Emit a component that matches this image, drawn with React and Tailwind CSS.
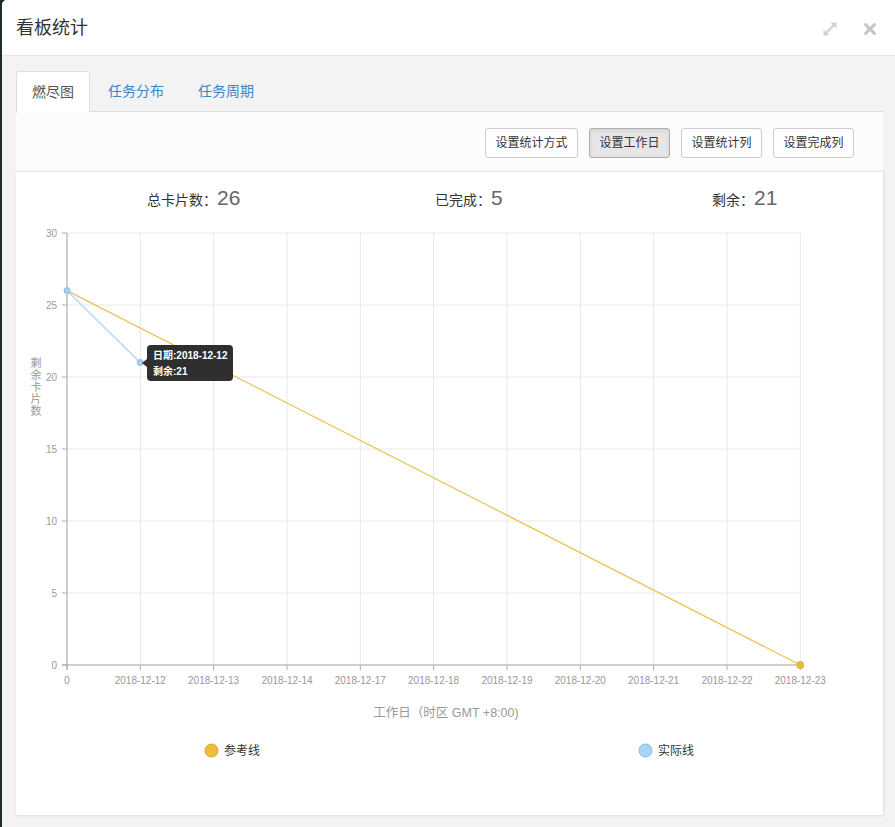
import React from "react";

const font = { fontFamily: '"Liberation Sans", "Noto Sans CJK SC", sans-serif' };

const xs = [67, 140.3, 213.6, 287, 360.3, 433.6, 507, 580.3, 653.6, 727, 800.3];
const xLabels = [
  "0",
  "2018-12-12",
  "2018-12-13",
  "2018-12-14",
  "2018-12-17",
  "2018-12-18",
  "2018-12-19",
  "2018-12-20",
  "2018-12-21",
  "2018-12-22",
  "2018-12-23",
];
const yTicks = [30, 25, 20, 15, 10, 5, 0];
const yPos = (v) => 665 - v * 14.4;

const Burndown = () => {
  return (
    <svg width="867" height="575" viewBox="0 0 867 575" className="block" style={font}>
      <g transform="translate(-16 -215)">
        {/* grid */}
        {yTicks.map((v) => (
          <line key={"h" + v} x1="67" x2="801" y1={yPos(v)} y2={yPos(v)} stroke="#e8e8e8" strokeWidth="1" />
        ))}
        {xs.map((x, i) => (
          <line key={"v" + i} x1={x} x2={x} y1="233" y2="665" stroke="#e8e8e8" strokeWidth="1" />
        ))}
        {/* axes */}
        <line x1="67" x2="67" y1="233" y2="670" stroke="#aaa" strokeWidth="1" />
        <line x1="62" x2="801" y1="665" y2="665" stroke="#aaa" strokeWidth="1" />
        {yTicks.map((v) => (
          <line key={"yt" + v} x1="62" x2="67" y1={yPos(v)} y2={yPos(v)} stroke="#aaa" />
        ))}
        {xs.map((x, i) => (
          <line key={"xt" + i} x1={x} x2={x} y1="665" y2="670" stroke="#aaa" />
        ))}
        {yTicks.map((v) => (
          <text key={"yl" + v} x="57" y={yPos(v) + 3.5} fontSize="10" fill="#999" textAnchor="end">
            {v}
          </text>
        ))}
        {xs.map((x, i) => (
          <text key={"xl" + i} x={x} y="684" fontSize="10" fill="#999" textAnchor="middle">
            {xLabels[i]}
          </text>
        ))}
        {/* axis names */}
        {["剩", "余", "卡", "片", "数"].map((c, i) => (
          <text key={c} x="36" y={367 + i * 12} fontSize="11" fill="#999" textAnchor="middle">
            {c}
          </text>
        ))}
        <text x="446" y="717" fontSize="12.5" fill="#999" textAnchor="middle">
          工作日（时区 GMT +8:00)
        </text>
        {/* series */}
        <line x1="67" y1="290.6" x2="800.3" y2="665" stroke="#e9c24f" strokeWidth="1.2" />
        <line x1="67" y1="290.6" x2="140.3" y2="362.6" stroke="#bcdcf2" strokeWidth="1.5" />
        <circle cx="67" cy="290.6" r="3" fill="#a9d0ec" stroke="#8dbbe0" strokeWidth="1" />
        <circle cx="140.3" cy="362.6" r="3" fill="#a9d0ec" stroke="#8dbbe0" strokeWidth="1" />
        <circle cx="800.3" cy="665" r="3.5" fill="#e6bb3c" stroke="#d8ad35" strokeWidth="1" />
        {/* tooltip */}
        <path d="M147 349 a4 4 0 0 1 4 -4 h78 a4 4 0 0 1 4 4 v28 a4 4 0 0 1 -4 4 h-78 a4 4 0 0 1 -4 -4 v-10 l-5 -4 l5 -4 z" fill="#2f2f2f" />
        <text x="153" y="359" fontSize="10" fontWeight="bold" fill="#fff">日期:2018-12-12</text>
        <text x="153" y="375" fontSize="10" fontWeight="bold" fill="#fff">剩余:21</text>
        {/* legend */}
        <circle cx="211.5" cy="750.5" r="6.5" fill="#efbd3a" stroke="#d9a82a" strokeWidth="1" />
        <text x="224" y="754.5" fontSize="12" fill="#333">参考线</text>
        <circle cx="645.5" cy="750.5" r="6.5" fill="#a9d3f2" stroke="#8cbde3" strokeWidth="1" />
        <text x="658" y="754.5" fontSize="12" fill="#333">实际线</text>
      </g>
    </svg>
  );
};

const App = () => {
  const buttons = ["设置统计方式", "设置工作日", "设置统计列", "设置完成列"];
  return (
    <div className="w-[895px] h-[827px] flex bg-[#1f2b30] overflow-hidden" style={font}>
      <div className="w-[2px] shrink-0 bg-[#1f2b30]" />
      <div className="flex-1 flex flex-col bg-[#f3f3f3] rounded-tl-[5px] overflow-hidden">
        {/* header */}
        <div className="h-[56px] shrink-0 bg-white border-b border-[#e5e5e5] flex items-center pl-[14px] pr-[18px]">
          <h4 className="text-[18px] text-[#333] leading-none">看板统计</h4>
          <div className="ml-auto flex items-center gap-[24px] pt-[2px]">
            <svg width="18" height="18" viewBox="0 0 18 18" fill="none" stroke="#cfcfcf" strokeWidth="2">
              <line x1="3.5" y1="14.5" x2="14.5" y2="3.5" />
              <path d="M9.5 2.5h6v6z" fill="#cfcfcf" stroke="none" />
              <path d="M2.5 9.5v6h6z" fill="#cfcfcf" stroke="none" />
            </svg>
            <svg width="14" height="14" viewBox="0 0 14 14" stroke="#c4c4c4" strokeWidth="3" strokeLinecap="round">
              <line x1="2.5" y1="2.5" x2="11.5" y2="11.5" />
              <line x1="11.5" y1="2.5" x2="2.5" y2="11.5" />
            </svg>
          </div>
        </div>

        {/* body */}
        <div className="flex-1 pl-[14px] pr-[12px] pt-[15px]">
          <div className="flex border-b border-[#ddd] h-[41px]">
            <div className="h-[42px] px-[15px] flex items-center bg-white border border-[#ddd] border-b-0 rounded-t-[4px] text-[14px] text-[#555]">
              燃尽图
            </div>
            <div className="h-[41px] ml-[3px] px-[15px] flex items-center text-[14px] text-[#3a87c8]">任务分布</div>
            <div className="h-[41px] ml-[4px] px-[15px] flex items-center text-[14px] text-[#3a87c8]">任务周期</div>
          </div>

          <div className="bg-[#fcfcfc]">
            <div className="flex justify-end gap-[11px] pt-[16px] pb-[13px] pr-[29px]">
              {buttons.map((b, i) => (
                <div
                  key={b}
                  className={
                    i === 1
                      ? "h-[30px] px-[9.5px] flex items-center rounded-[3px] border border-[#adadad] bg-[#e6e6e6] text-[12px] text-[#333] shadow-[inset_0_2px_4px_rgba(0,0,0,0.08)]"
                      : "h-[30px] px-[9.5px] flex items-center rounded-[3px] border border-[#ccc] bg-white text-[12px] text-[#333]"
                  }
                >
                  {b}
                </div>
              ))}
            </div>

            <div className="bg-white border-t border-[#e6e6e6] shadow-[0_1px_3px_rgba(0,0,0,0.08),1px_0_2px_rgba(0,0,0,0.06)] h-[644px]">
              <div className="h-[43px] flex items-center pl-[131px] pt-[9px]">
                <div className="w-[288px] flex items-baseline">
                  <span className="text-[14px] text-[#333]">总卡片数：</span>
                  <span className="text-[21px] text-[#666]">26</span>
                </div>
                <div className="w-[277px] flex items-baseline">
                  <span className="text-[14px] text-[#333]">已完成：</span>
                  <span className="text-[21px] text-[#666]">5</span>
                </div>
                <div className="flex items-baseline">
                  <span className="text-[14px] text-[#333]">剩余：</span>
                  <span className="text-[21px] text-[#666]">21</span>
                </div>
              </div>
              <Burndown />
            </div>
          </div>
        </div>
      </div>
    </div>
  );
};

export default App;
